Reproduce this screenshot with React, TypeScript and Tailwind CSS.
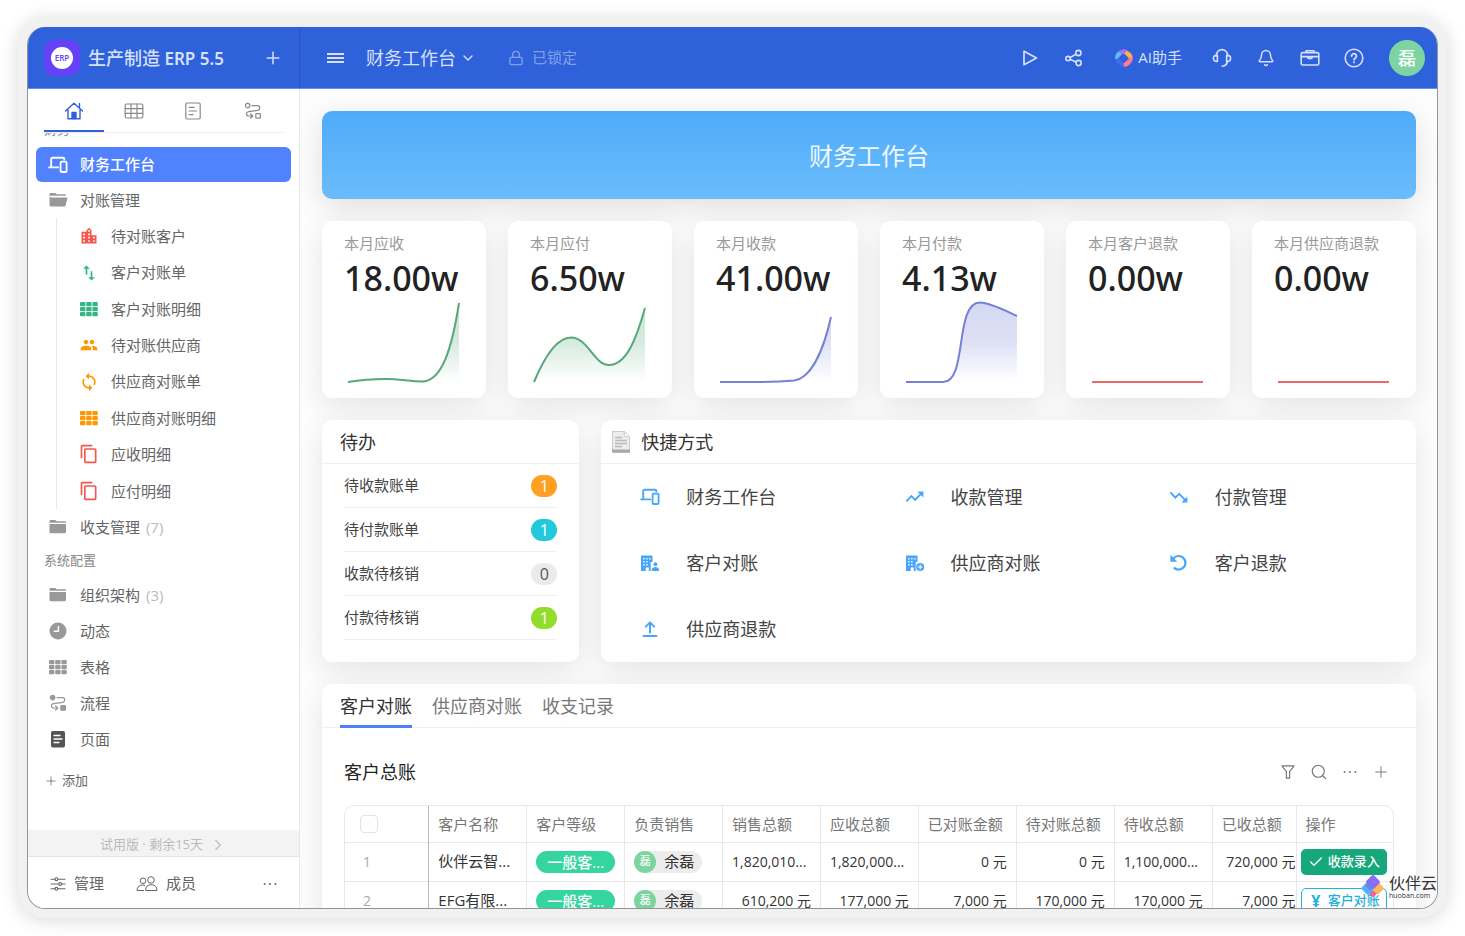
import type { ReactNode } from 'react'
import { Bell, Check, ChevronDown, ChevronRight, Lock, Plus, Search } from 'lucide-react'
import { MdContentCopy, MdLocationCity, MdPeople, MdSwapVert, MdSync } from 'react-icons/md'

const Svg = ({ size = 20, children }: { size?: number; children: ReactNode }) => (
    <svg
        width={size}
        height={size}
        viewBox="0 0 20 20"
        fill="none"
        stroke="currentColor"
        strokeWidth="1.4"
        strokeLinecap="round"
        strokeLinejoin="round"
        aria-hidden="true"
    >
        {children}
    </svg>
)

const DevicesIcon = () => (
    <Svg>
        <path d="M3.2 12V4c0-.8.5-1.2 1.2-1.2h10.8c.7 0 1.1.4 1.1 1.1v.6M1.2 12.4h9" strokeWidth="1.9" />
        <rect x="12.6" y="6.6" width="6" height="10.4" rx="1" strokeWidth="1.8" />
    </Svg>
)

const FolderIcon = ({ open = false }: { open?: boolean }) => (
    <Svg>
        <g fill="currentColor" stroke="none">
            <path d="M1.5 5V4.2c0-.8.5-1.2 1.2-1.2h4.6l1.6 1.3h8c.7 0 1.1.4 1.1 1.1v.4H1.5z" />
            {open ? (
                <path d="M1.5 6.2 3 7.4h16.5l-1.8 7.8c-.2.8-.7 1.3-1.5 1.3H3.6c-1.3 0-2.1-.7-2.1-1.8z" />
            ) : (
                <path d="M1.5 7H18v7.7c0 .9-.6 1.5-1.4 1.5H3c-.9 0-1.5-.6-1.5-1.5z" />
            )}
        </g>
    </Svg>
)

const CellsIcon = () => (
    <Svg>
        <g fill="currentColor" stroke="none">
            {[3, 8, 13].map((y) =>
                [1, 7.2, 13.4].map((x) => (
                    <rect key={`${x}-${y}`} x={x} y={y} width="5.4" height="4.2" rx="0.9" />
                ))
            )}
        </g>
    </Svg>
)

const ClockIcon = () => (
    <Svg>
        <circle cx="10" cy="10" r="8.5" fill="currentColor" stroke="none" />
        <path d="M10.4 5.5v4.8H6.2" stroke="#fff" />
    </Svg>
)

const FlowIcon = ({ filled = false }: { filled?: boolean }) => (
    <Svg>
        <circle cx="4.6" cy="4.6" r="2.2" fill={filled ? 'currentColor' : 'none'} strokeWidth="1.2" />
        <rect
            x="12.8"
            y="12.6"
            width="4.6"
            height="4.6"
            rx="0.8"
            fill={filled ? 'currentColor' : 'none'}
            strokeWidth="1.2"
        />
        <path
            d="M9 4.6h5.4c3.2 0 3 4.2.2 4.8L5.6 10.6c-3 .5-2.6 4.4.2 4.4H9.6M7.6 13l2.2 2-2.2 2"
            strokeWidth="1.2"
        />
    </Svg>
)

const PageIcon = () => (
    <Svg>
        <rect x="3" y="2" width="14" height="16.5" rx="1.8" fill="currentColor" stroke="none" />
        <path d="M6 6.5h6M6 10h8M6 13.5h5" stroke="#fff" />
    </Svg>
)

const BuildingIcon = ({ children }: { children: ReactNode }) => (
    <Svg>
        <g fill="currentColor" stroke="none">
            <path
                fillRule="evenodd"
                d="M2 2.5h9.5c.6 0 1 .4 1 1V9h-1.8v9H8.8v-3.5H5.7V18H1V3.5c0-.6.4-1 1-1zM3.2 5v1.4h1.4V5zM6.2 5v1.4h1.4V5zM9.2 5v1.4h1.4V5zM3.2 8v1.4h1.4V8zM6.2 8v1.4h1.4V8zM3.2 11v1.4h1.4V11zM6.2 11v1.4h1.4V11z"
            />
            {children}
        </g>
    </Svg>
)

// ring with a rotated square hole, one colour per facet
const AiIcon = () => (
    <svg width="20" height="20" viewBox="0 0 20 20" aria-hidden="true">
        <path d="M4.4 4C6.4.8 11.4.2 14 2.8L10.6 6.4 5 5.8z" fill="#a46cf4" />
        <path d="M12.6 2.8c3 .8 5.6 3.2 6.2 6.6l-2.6 2-6-6z" fill="#ffb04f" />
        <path d="M18.8 9c.6 2.6-.6 4.8-2.6 6.6L13 12.6l2-2.4z" fill="#ff6fae" />
        <path d="M16.8 15c-2 2.6-4.6 4.2-7.6 4l-.6-3.2 5-3.6z" fill="#ff7f8f" />
        <path d="M10.4 19C5.6 17.8 1.6 14.6 1 10.4l3.2-1.6 5 6.2z" fill="#3f6bf0" />
        <path d="M1 11C.8 7.8 2 5 4.8 3.6l3 2.4-3.4 4.2z" fill="#5cc0f8" />
        <path d="m10 5.8 4.4 4.6-4.4 4.4-4.4-4.6z" fill="#2f61da" />
    </svg>
)

const MoreIcon = () => (
    <Svg size={18}>
        <g fill="currentColor" stroke="none">
            <circle cx="4" cy="10" r="1.1" />
            <circle cx="10" cy="10" r="1.1" />
            <circle cx="16" cy="10" r="1.1" />
        </g>
    </Svg>
)

const SIDE_TABS = [
    {
        label: '首页',
        icon: (
            <Svg>
                <path d="M1.5 10 10 2.2l8.5 7.8M4 8.5v9.2h12V8.5M15.5 6.5v-4" />
                <path d="M8 17.5v-6h4v6z" fill="currentColor" />
            </Svg>
        ),
    },
    {
        label: '表格',
        icon: (
            <Svg>
                <rect x="1.2" y="3" width="17.6" height="14" rx="1.4" strokeWidth="1.2" />
                <path d="M1.2 7.7h17.6M1.2 12.3h17.6M7 3v14M13 3v14" strokeWidth="1.2" />
            </Svg>
        ),
    },
    {
        label: '页面',
        icon: (
            <Svg>
                <rect x="2.8" y="2" width="14.4" height="16" rx="1.2" strokeWidth="1.2" />
                <path d="M6.2 6.4h5M6.2 10h7.4M6.2 13.6h4" strokeWidth="1.2" />
            </Svg>
        ),
    },
    { label: '流程', icon: <FlowIcon /> },
]

const CHILDREN = [
    { label: '待对账客户', color: 'text-[#f4574d]', icon: <MdLocationCity size={20} /> },
    { label: '客户对账单', color: 'text-[#35b584]', icon: <MdSwapVert size={20} /> },
    { label: '客户对账明细', color: 'text-[#35b584]', icon: <CellsIcon /> },
    { label: '待对账供应商', color: 'text-[#ff9800]', icon: <MdPeople size={18} className="mx-px" /> },
    { label: '供应商对账单', color: 'text-[#ff9800]', icon: <MdSync size={20} /> },
    { label: '供应商对账明细', color: 'text-[#ff9800]', icon: <CellsIcon /> },
    { label: '应收明细', color: 'text-[#f4574d]', icon: <MdContentCopy size={20} /> },
    { label: '应付明细', color: 'text-[#f4574d]', icon: <MdContentCopy size={20} /> },
]

const SYSTEM = [
    { label: '组织架构', count: 3, color: 'text-[#999]', icon: <FolderIcon /> },
    { label: '动态', color: 'text-[#999]', icon: <ClockIcon /> },
    { label: '表格', color: 'text-[#999]', icon: <CellsIcon /> },
    { label: '流程', color: 'text-[#999]', icon: <FlowIcon filled /> },
    { label: '页面', color: 'text-[#555]', icon: <PageIcon /> },
]

const STATS = [
    {
        label: '本月应收',
        value: '18.00w',
        color: '#55a87b',
        line: 'M4 84C16 82 28 81 42 81S66 83.5 78 83.5C98 83.5 108 50 115 5',
    },
    {
        label: '本月应付',
        value: '6.50w',
        color: '#55a87b',
        line: 'M4 84C14 60 26 39.5 41 39.5C58 39.5 64 67 79 67C96 67 106 42 115 10',
    },
    {
        label: '本月收款',
        value: '41.00w',
        color: '#7481d6',
        line: 'M4 84H41C60 84 68 83.5 78 82.5C96 80 108 50 115 19',
    },
    {
        label: '本月付款',
        value: '4.13w',
        color: '#7481d6',
        line: 'M4 84H41C66 84 52 4.5 78 4.5C88 4.5 102 12 115 18',
    },
    { label: '本月客户退款', value: '0.00w', color: '#ea6a68', line: 'M4 84H115' },
    { label: '本月供应商退款', value: '0.00w', color: '#ea6a68', line: 'M4 84H115' },
]

const TODOS = [
    { label: '待收款账单', count: 1, badge: 'bg-[#ffa023] text-white' },
    { label: '待付款账单', count: 1, badge: 'bg-[#22c9da] text-white' },
    { label: '收款待核销', count: 0, badge: 'bg-[#eaeaea] text-[#555]' },
    { label: '付款待核销', count: 1, badge: 'bg-[#92dc2c] text-white' },
]

const SHORTCUTS = [
    { label: '财务工作台', icon: <DevicesIcon /> },
    {
        label: '收款管理',
        icon: (
            <Svg>
                <path d="m1.4 14.4 5-5.2 3.8 3.8 6-6.4" strokeWidth="1.9" strokeLinecap="butt" strokeLinejoin="miter" />
                <path d="M12.4 4.4h6v6z" fill="currentColor" stroke="none" />
            </Svg>
        ),
    },
    {
        label: '付款管理',
        icon: (
            <Svg>
                <path d="m1.4 5.4 5 5.2 3.8-3.8 6 6.4" strokeWidth="1.9" strokeLinecap="butt" strokeLinejoin="miter" />
                <path d="M12.4 15.4h6v-6z" fill="currentColor" stroke="none" />
            </Svg>
        ),
    },
    {
        label: '客户对账',
        icon: (
            <BuildingIcon>
                <circle cx="15.4" cy="11.2" r="1.9" />
                <path d="M11.8 18v-1.6c0-1.5 1.6-2.4 3.6-2.4s3.6.9 3.6 2.4V18z" />
            </BuildingIcon>
        ),
    },
    {
        label: '供应商对账',
        icon: (
            <BuildingIcon>
                <circle cx="15.2" cy="14" r="4" />
                <path d="M15.2 12v4M13.2 14h4" stroke="#fff" strokeWidth="1.1" />
            </BuildingIcon>
        ),
    },
    {
        label: '客户退款',
        icon: (
            <Svg>
                <path d="M4.6 5.2A6.8 6.8 0 1 1 4.8 14.6" strokeWidth="2.2" strokeLinecap="butt" />
                <path d="M1.4 1.8v7h7z" fill="currentColor" stroke="none" />
            </Svg>
        ),
    },
    {
        label: '供应商退款',
        icon: (
            <Svg>
                <path d="M10 13.4V4M5.8 7.6 10 3.4l4.2 4.2M3.5 17h13" strokeWidth="2" />
            </Svg>
        ),
    },
]

const COLUMNS = [
    '客户名称',
    '客户等级',
    '负责销售',
    '销售总额',
    '应收总额',
    '已对账金额',
    '待对账总额',
    '待收总额',
    '已收总额',
]

const ROWS = [
    {
        name: '伙伴云智...',
        amounts: ['1,820,010...', '1,820,000...', '0 元', '0 元', '1,100,000...', '720,000 元'],
        action: '收款录入',
    },
    {
        name: 'EFG有限...',
        amounts: ['610,200 元', '177,000 元', '7,000 元', '170,000 元', '170,000 元', '7,000 元'],
        action: '客户对账',
    },
]

const CARD = 'rounded-[10px] bg-white shadow-[0_8px_30px_rgba(0,0,0,0.1)]'

function Header() {
    return (
        <header className="flex h-[62px] shrink-0 border-b border-[#6a8ee8] bg-[#2f61da] text-[#d5e0fa]">
            <div className="flex w-[272px] shrink-0 items-center border-r border-[#2a56c4] pr-4 pl-4">
                <span className="flex size-9 items-center justify-center rounded-[11px] bg-[#6541f7]">
                    <span className="flex size-[22px] items-center justify-center rounded-full bg-white text-[8px] leading-none font-semibold text-[#6541f7]">
                        ERP
                    </span>
                </span>
                <h1 className="ml-2 font-['Noto_Sans','Noto_Sans_CJK_SC',sans-serif] text-[17px] font-semibold whitespace-nowrap">
                    <span className="text-lg font-medium">生产制造</span> ERP 5.5
                </h1>
                <button className="ml-auto" aria-label="新建">
                    <Plus size={20} strokeWidth={1.8} />
                </button>
            </div>
            <div className="flex flex-1 items-center pr-3 pl-[25px]">
                <button aria-label="菜单">
                    <Svg>
                        <path d="M2 6h17M2 10h17M2 14h17" strokeLinecap="butt" strokeWidth="2" />
                    </Svg>
                </button>
                <button className="ml-[21px] flex items-center gap-1 text-lg">
                    财务工作台
                    <ChevronDown size={16} />
                </button>
                <span className="ml-8 flex items-center gap-2 text-[15px] opacity-50">
                    <Lock size={16} strokeWidth={2} />
                    已锁定
                </span>
                <div className="ml-auto flex items-center gap-6">
                    <button aria-label="运行">
                        <Svg>
                            <path d="M4 3.2v13.6L16.5 10z" strokeWidth="1.7" />
                        </Svg>
                    </button>
                    <button aria-label="分享">
                        <Svg>
                            <circle cx="4" cy="10.6" r="2.2" strokeWidth="1.6" />
                            <circle cx="14.4" cy="5" r="2.6" strokeWidth="1.6" />
                            <circle cx="14.6" cy="15" r="2.6" strokeWidth="1.6" />
                            <path d="m6.2 9.5 5.7-3.2M6.3 11.6l5.7 2.4" strokeWidth="1.6" />
                        </Svg>
                    </button>
                    <button className="mx-1.5 flex items-center gap-1 text-[15px]">
                        <AiIcon />
                        AI助手
                    </button>
                    <button aria-label="客服">
                        <Svg>
                            <path
                                d="M4.4 7.6V7.2a5.6 5.6 0 0 1 11.2 0v.4M15.4 13.4c-.4 2.4-1.6 4-3.6 4.6h-1.6"
                                strokeWidth="1.7"
                            />
                            <path
                                d="M5.4 7.4v6h-.8C2.8 13.4 1.4 12.2 1.4 10.4S2.8 7.4 4.6 7.4zM14.6 7.4v6h.8c1.8 0 3.2-1.2 3.2-3s-1.4-3-3.2-3z"
                                strokeWidth="1.6"
                            />
                        </Svg>
                    </button>
                    <button className="px-px" aria-label="通知">
                        <Bell size={18} strokeWidth={2} />
                    </button>
                    <button aria-label="工具箱">
                        <Svg>
                            <rect x="1.2" y="4.6" width="17.6" height="12.4" rx="1.4" strokeWidth="1.6" />
                            <path
                                d="M6 4.4V2.8h8v1.6M1.4 8.6h17.2M7.6 8.8c0 2.4 4.8 2.4 4.8 0"
                                strokeWidth="1.6"
                            />
                        </Svg>
                    </button>
                    <button aria-label="帮助">
                        <Svg>
                            <circle cx="10" cy="10" r="8.8" strokeWidth="1.6" />
                            <path d="M7.6 8a2.4 2.4 0 1 1 3.6 2.1c-.8.4-1.2.8-1.2 1.7M10 14.2v.2" strokeWidth="1.8" />
                        </Svg>
                    </button>
                    <button className="ml-px flex size-9 items-center justify-center rounded-full bg-[#7cd5a0] text-lg font-medium text-white">
                        磊
                    </button>
                </div>
            </div>
        </header>
    )
}

function Sidebar() {
    return (
        <aside className="flex w-[272px] shrink-0 flex-col border-r border-[#e8e8e8] bg-white text-[15px] text-[#666]">
            <div className="mx-4 grid h-11 shrink-0 grid-cols-4 border-b border-[#ececec]">
                {SIDE_TABS.map((tab, i) => (
                    <button
                        key={tab.label}
                        aria-label={tab.label}
                        className={
                            i === 0
                                ? 'flex items-center justify-center border-b-2 border-[#2f61da] pt-0.5 text-[#2f61da]'
                                : 'flex items-center justify-center border-b-2 border-transparent pt-0.5 text-[#888]'
                        }
                    >
                        {tab.icon}
                    </button>
                ))}
            </div>
            <nav className="min-h-0 flex-1 overflow-hidden px-2">
                <div className="mb-2 flex h-1.5 items-end pl-2 text-[13px] leading-5 text-[#888]">财务</div>
                <a
                    href="#finance"
                    className="flex h-[35px] items-center gap-3 rounded-md bg-[#5182fe] pl-3 font-medium text-white"
                >
                    <DevicesIcon />
                    财务工作台
                </a>
                <a href="#reconcile" className="flex h-9 items-center gap-3 pl-3">
                    <span className="text-[#999]">
                        <FolderIcon open />
                    </span>
                    对账管理
                </a>
                <ul className="ml-5 grid h-[291px] grid-rows-8 border-l border-[#e8e8e8] pl-[22px]">
                    {CHILDREN.map((item) => (
                        <li key={item.label}>
                            <a href="#table" className="flex h-full items-center gap-3">
                                <span className={item.color}>{item.icon}</span>
                                {item.label}
                            </a>
                        </li>
                    ))}
                </ul>
                <a href="#payments" className="flex h-9 items-center gap-3 pl-3">
                    <span className="text-[#999]">
                        <FolderIcon />
                    </span>
                    <span>
                        收支管理 <span className="ml-0.5 text-[#bbb]">(7)</span>
                    </span>
                </a>
                <div className="flex h-8 items-center pl-2 text-[13px] text-[#888]">系统配置</div>
                {SYSTEM.map((item) => (
                    <a key={item.label} href="#system" className="flex h-9 items-center gap-3 pl-3">
                        <span className={item.color}>{item.icon}</span>
                        <span>
                            {item.label}
                            {item.count && <span className="ml-1.5 text-[#bbb]">({item.count})</span>}
                        </span>
                    </a>
                ))}
                <button className="mt-3 flex h-6 items-center gap-1 pl-2 text-[13px]">
                    <Plus size={14} strokeWidth={1.3} />
                    添加
                </button>
            </nav>
            <a
                href="#trial"
                className="flex h-[27px] shrink-0 items-center justify-center gap-1.5 border-b border-[#e4e4e4] bg-[#f3f3f3] pt-1 text-[13px] text-[#bbb]"
            >
                试用版 · 剩余15天
                <ChevronRight size={18} strokeWidth={1.5} />
            </a>
            <div className="flex h-[51px] shrink-0 items-center pt-0.5 pr-5 pl-5">
                <button className="flex items-center gap-1.5">
                    <Svg>
                        <path d="M3 5.2h4M10 5.2h7M3 10h7.5M14 10h3M3 14.8h4M10 14.8h7" strokeWidth="1.1" />
                        <circle cx="8.4" cy="5.2" r="1.4" strokeWidth="1.1" />
                        <circle cx="12.2" cy="10" r="1.4" strokeWidth="1.1" />
                        <circle cx="8.4" cy="14.8" r="1.4" strokeWidth="1.1" />
                    </Svg>
                    管理
                </button>
                <button className="ml-8 flex items-center gap-2">
                    <svg width="22" height="20" viewBox="0 0 22 20" fill="none" stroke="currentColor" aria-hidden="true">
                        <circle cx="7" cy="6.8" r="2.8" />
                        <circle cx="15" cy="6" r="3.3" />
                        <path d="M1 16.5c0-3.6 2.2-5.4 5.6-5.4 1 0 1.9.2 2.6.6M1 16.5h7M9.6 16.5c0-3.7 2-5.8 5.7-5.8s5.7 2.1 5.7 5.8z" />
                    </svg>
                    成员
                </button>
                <button className="ml-auto" aria-label="更多">
                    <MoreIcon />
                </button>
            </div>
        </aside>
    )
}

function Stats() {
    return (
        <section className="grid grid-cols-6 gap-[22px]">
            {STATS.map((stat, i) => (
                <article key={stat.label} className={`${CARD} h-[177px] px-[22px] pt-3`}>
                    <h3 className="text-[15px] leading-5 whitespace-nowrap text-[#999]">{stat.label}</h3>
                    <p className="font-['Noto_Sans',sans-serif] text-[34px] leading-[50px] font-medium text-[#222]">
                        {stat.value}
                    </p>
                    <svg viewBox="0 0 120 88" className="-mt-[5px] w-full" fill="none" aria-hidden="true">
                        <linearGradient id={`area-${i}`} x1="0" y1="0" x2="0" y2="88" gradientUnits="userSpaceOnUse">
                            <stop offset="0" stopColor={stat.color} stopOpacity="0.32" />
                            <stop offset="0.5" stopColor={stat.color} stopOpacity="0.24" />
                            <stop offset="0.95" stopColor={stat.color} stopOpacity="0" />
                        </linearGradient>
                        <path d={`${stat.line}V84H4Z`} fill={`url(#area-${i})`} />
                        <path d={stat.line} stroke={stat.color} strokeWidth="2" />
                    </svg>
                </article>
            ))}
        </section>
    )
}

function Todos() {
    return (
        <section className={CARD}>
            <h2 className="h-11 border-b border-[#f0f0f0] px-[18px] text-lg leading-[44px] text-[#333]">待办</h2>
            <ul className="px-[22px]">
                {TODOS.map((todo) => (
                    <li
                        key={todo.label}
                        className="flex h-11 items-center justify-between border-b border-[#f0f0f0] text-[15px] text-[#444]"
                    >
                        {todo.label}
                        <span className={`h-[22px] w-[26px] rounded-full text-center text-base leading-[22px] ${todo.badge}`}>
                            {todo.count}
                        </span>
                    </li>
                ))}
            </ul>
        </section>
    )
}

function Shortcuts() {
    return (
        <section className={CARD}>
            <h2 className="flex h-11 items-center gap-2.5 border-b border-[#f0f0f0] px-[10px] text-lg text-[#333]">
                <svg width="20" height="22" viewBox="0 0 20 22" aria-hidden="true">
                    <path d="M1.5.5h11.8l5.2 5.2v15.8h-17z" fill="#ededed" stroke="#ccc" />
                    <path d="M1 18.5h18v3H1z" fill="#a8a8a8" />
                    <path d="M13.3.5v5.2h5.2z" fill="#fff" stroke="#ccc" />
                    <path d="M4 6.5h7M4 9.5h12M4 12.5h12M4 15.5h7" stroke="#bbb" strokeWidth="1.3" />
                </svg>
                快捷方式
            </h2>
            <div className="grid grid-cols-3 px-[11px]">
                {SHORTCUTS.map((item) => (
                    <a
                        key={item.label}
                        href="#shortcut"
                        className="flex h-[66px] items-center pl-7 text-lg text-[#444]"
                    >
                        <span className="w-[46px] text-[#47a5fb]">{item.icon}</span>
                        {item.label}
                    </a>
                ))}
            </div>
        </section>
    )
}

function Ledger() {
    return (
        <section className={CARD}>
            <div className="flex h-11 gap-5 border-b border-[#f0f0f0] px-[18px] text-lg text-[#777]">
                <button className="-mb-px h-11 border-b-3 border-[#4f80fc] pt-0.5 text-[#333]">客户对账</button>
                <button>供应商对账</button>
                <button>收支记录</button>
            </div>
            <div className="px-[22px] pt-6">
                <div className="flex h-10 items-center">
                    <h2 className="text-lg text-[#222]">客户总账</h2>
                    <div className="ml-auto flex items-center gap-[13px] pr-1 text-[#777]">
                        <button aria-label="筛选">
                            <Svg size={18}>
                                <path d="M3.2 3.2h13.6l-5 6.4v7.2H8.2V9.6z" strokeWidth="1.3" />
                            </Svg>
                        </button>
                        <button aria-label="搜索">
                            <Search size={18} strokeWidth={1.5} />
                        </button>
                        <button aria-label="更多">
                            <MoreIcon />
                        </button>
                        <button aria-label="添加">
                            <Plus size={18} strokeWidth={1.3} />
                        </button>
                    </div>
                </div>
                <div className="mt-[13px] overflow-hidden rounded-[10px] border border-[#e8e8e8]">
                    <table className="w-full table-fixed border-collapse text-[15px] whitespace-nowrap text-[#333]">
                        <colgroup>
                            <col className="w-[8%]" />
                            {COLUMNS.slice(0, -1).map((name) => (
                                <col key={name} />
                            ))}
                            <col className="w-[8%]" />
                            <col className="w-[97px]" />
                        </colgroup>
                        <thead>
                            <tr className="h-9 border-b border-[#e8e8e8] text-left text-[#777]">
                                <th className="border-r border-[#bbb] pl-[15px]">
                                    <input
                                        type="checkbox"
                                        aria-label="全选"
                                        className="block size-[18px] appearance-none rounded border border-[#e2e2e2] bg-white"
                                    />
                                </th>
                                {COLUMNS.map((name) => (
                                    <th key={name} className="border-r border-[#e8e8e8] pl-[9px] font-normal">
                                        {name}
                                    </th>
                                ))}
                                <th className="pl-[9px] font-normal">操作</th>
                            </tr>
                        </thead>
                        <tbody>
                            {ROWS.map((row, i) => (
                                <tr key={row.name} className="h-[39px] border-b border-[#e8e8e8]">
                                    <td className="border-r border-[#bbb] pl-[18px] text-sm text-[#aaa]">{i + 1}</td>
                                    <td className="border-r border-[#e8e8e8] pl-[9px]">{row.name}</td>
                                    <td className="border-r border-[#e8e8e8] px-[9px]">
                                        <span className="block h-[22px] rounded-full bg-[#35d5a0] text-center leading-[22px] font-medium text-white">
                                            一般客...
                                        </span>
                                    </td>
                                    <td className="border-r border-[#e8e8e8] pl-[9px]">
                                        <span className="flex h-[22px] w-[68px] items-center gap-2 rounded-full bg-[#ececec]">
                                            <span className="flex size-[22px] items-center justify-center rounded-full bg-[#7cd5a0] text-[11px] text-white">
                                                磊
                                            </span>
                                            余磊
                                        </span>
                                    </td>
                                    {row.amounts.map((amount, n) => (
                                        <td
                                            key={n}
                                            className={
                                                n === 5
                                                    ? 'overflow-hidden border-r border-[#e8e8e8] text-right text-sm'
                                                    : amount.endsWith('...')
                                                      ? 'border-r border-[#e8e8e8] pl-[9px] text-sm'
                                                      : 'border-r border-[#e8e8e8] pr-[9px] text-right text-sm'
                                            }
                                        >
                                            {amount}
                                        </td>
                                    ))}
                                    <td className="pr-1.5 pl-1">
                                        <button
                                            className={
                                                i === 0
                                                    ? 'flex h-[26px] w-full items-center justify-center gap-1 rounded-[5px] bg-[#16a87a] text-[13px] font-medium text-white'
                                                    : 'flex h-[26px] w-full items-center justify-center gap-1 rounded-[5px] border border-[#25b0e0] bg-white text-[13px] font-medium text-[#25b0e0]'
                                            }
                                        >
                                            {i === 0 ? (
                                                <Check size={16} />
                                            ) : (
                                                <span className="w-4 text-base leading-none font-bold">¥</span>
                                            )}
                                            {row.action}
                                        </button>
                                    </td>
                                </tr>
                            ))}
                        </tbody>
                    </table>
                </div>
            </div>
        </section>
    )
}

function Watermark() {
    return (
        <div className="absolute right-0 bottom-2 flex items-center gap-1 text-[#333]">
            <svg width="24" height="26" viewBox="0 0 24 26" aria-hidden="true">
                <rect x="8" y="14" width="8" height="8" rx="2" transform="rotate(45 12 18)" fill="#ff5b8d" />
                <rect x="2" y="9" width="10.5" height="10.5" rx="2" transform="rotate(45 7.25 14.25)" fill="#4fb3fb" />
                <rect x="12" y="9.5" width="9.5" height="9.5" rx="2" transform="rotate(45 16.75 14.25)" fill="#ffb75a" />
                <rect x="6.5" y="2.5" width="11" height="11" rx="2.2" transform="rotate(45 12 8)" fill="#8c6cf5" />
                <rect x="5.5" y="7.5" width="8" height="8" rx="1" transform="rotate(45 9.5 11.5)" fill="#6f7af0" opacity="0.8" />
            </svg>
            <span>
                <span className="block text-base leading-[18px]">伙伴云</span>
                <span className="block text-[7px] leading-[8px]">huoban.com</span>
            </span>
        </div>
    )
}

export default function App() {
    return (
        <div className="h-screen bg-white p-[18px] font-['Open_Sans','Noto_Sans_CJK_SC',sans-serif]">
            <div className="h-full rounded-[27px] bg-[#f1f1f1] p-[9px] shadow-[0_2px_18px_rgba(0,20,10,0.16)]">
                <div className="relative flex h-full flex-col overflow-hidden rounded-[18px] border-x border-b border-[#909696] bg-white">
                    <Header />
                    <div className="flex min-h-0 flex-1">
                        <Sidebar />
                        <main className="flex min-w-0 flex-1 flex-col gap-[22px] overflow-hidden bg-[#fdfdfd] pt-[22px] pr-[21px] pl-[22px]">
                            <h2 className="h-[88px] shrink-0 rounded-[10px] bg-linear-to-b from-[#50abf8] to-[#6abcfc] text-center text-2xl leading-[90px] text-white/90 shadow-[0_8px_30px_rgba(0,0,0,0.12)]">
                                财务工作台
                            </h2>
                            <Stats />
                            <div className="grid grid-cols-[6fr_19fr] gap-[22px] *:min-h-[242px]">
                                <Todos />
                                <Shortcuts />
                            </div>
                            <Ledger />
                        </main>
                    </div>
                    <Watermark />
                </div>
            </div>
        </div>
    )
}
